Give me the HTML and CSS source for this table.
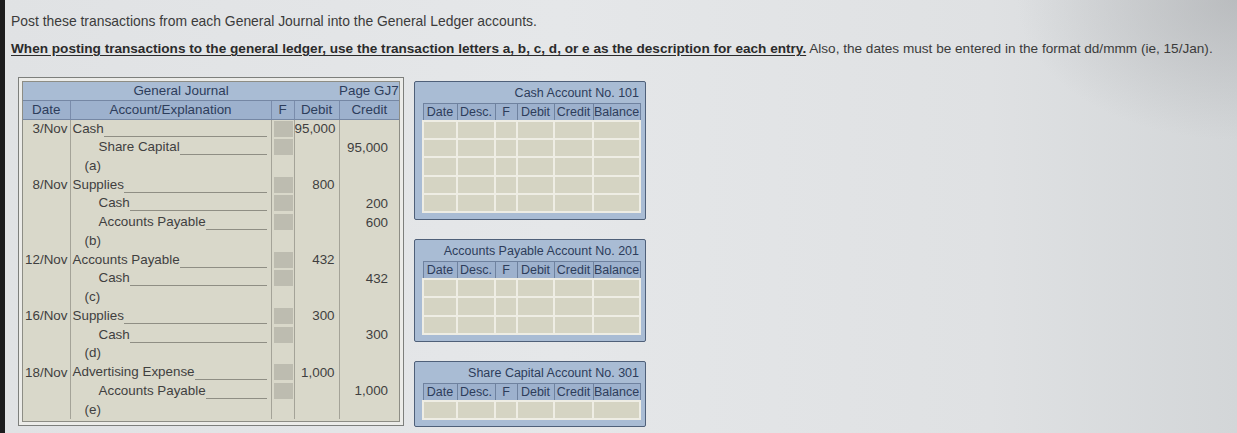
FILE: index.html
```html
<!DOCTYPE html>
<html lang="en">
<head>
<meta charset="utf-8">
<title>General Journal posting</title>
<link rel="stylesheet" href="styles.css">
</head>
<body>
<div class="screen">
  <p class="intro">Post these transactions from each General Journal into the General Ledger accounts.</p>
  <p class="instr"><strong>When posting transactions to the general ledger, use the transaction letters a, b, c, d, or e as the description for each entry.</strong> Also, the dates must be entered in the format dd/mmm (ie, 15/Jan).</p>

  <div class="workspace">
    <div class="journal">
      <div class="gj-frame">
        <table class="gj">
          <colgroup>
            <col class="c-date"><col class="c-acct"><col class="c-f"><col class="c-dr"><col class="c-cr">
          </colgroup>
          <thead>
            <tr class="gj-title"><th colspan="4">General Journal</th><th class="page">Page GJ7</th></tr>
            <tr class="gj-cols"><th>Date</th><th>Account/Explanation</th><th>F</th><th>Debit</th><th>Credit</th></tr>
          </thead>
          <tbody>
            <tr><td class="date">3/Nov</td><td><div class="acct-line"><span>Cash</span><i></i></div></td><td><div class="fbox"></div></td><td class="num dr">95,000</td><td class="num cr"></td></tr>
            <tr><td class="date"></td><td><div class="acct-line ind2"><span>Share Capital</span><i></i></div></td><td><div class="fbox"></div></td><td class="num dr"></td><td class="num cr">95,000</td></tr>
            <tr><td class="date"></td><td><div class="desc">(a)</div></td><td></td><td></td><td></td></tr>

            <tr><td class="date">8/Nov</td><td><div class="acct-line"><span>Supplies</span><i></i></div></td><td><div class="fbox"></div></td><td class="num dr">800</td><td class="num cr"></td></tr>
            <tr><td class="date"></td><td><div class="acct-line ind2"><span>Cash</span><i></i></div></td><td><div class="fbox"></div></td><td class="num dr"></td><td class="num cr">200</td></tr>
            <tr><td class="date"></td><td><div class="acct-line ind2"><span>Accounts Payable</span><i></i></div></td><td><div class="fbox"></div></td><td class="num dr"></td><td class="num cr">600</td></tr>
            <tr><td class="date"></td><td><div class="desc">(b)</div></td><td></td><td></td><td></td></tr>

            <tr><td class="date">12/Nov</td><td><div class="acct-line"><span>Accounts Payable</span><i></i></div></td><td><div class="fbox"></div></td><td class="num dr">432</td><td class="num cr"></td></tr>
            <tr><td class="date"></td><td><div class="acct-line ind2"><span>Cash</span><i></i></div></td><td><div class="fbox"></div></td><td class="num dr"></td><td class="num cr">432</td></tr>
            <tr><td class="date"></td><td><div class="desc">(c)</div></td><td></td><td></td><td></td></tr>

            <tr><td class="date">16/Nov</td><td><div class="acct-line"><span>Supplies</span><i></i></div></td><td><div class="fbox"></div></td><td class="num dr">300</td><td class="num cr"></td></tr>
            <tr><td class="date"></td><td><div class="acct-line ind2"><span>Cash</span><i></i></div></td><td><div class="fbox"></div></td><td class="num dr"></td><td class="num cr">300</td></tr>
            <tr><td class="date"></td><td><div class="desc">(d)</div></td><td></td><td></td><td></td></tr>

            <tr><td class="date">18/Nov</td><td><div class="acct-line"><span>Advertising Expense</span><i></i></div></td><td><div class="fbox"></div></td><td class="num dr">1,000</td><td class="num cr"></td></tr>
            <tr><td class="date"></td><td><div class="acct-line ind2"><span>Accounts Payable</span><i></i></div></td><td><div class="fbox"></div></td><td class="num dr"></td><td class="num cr">1,000</td></tr>
            <tr><td class="date"></td><td><div class="desc">(e)</div></td><td></td><td></td><td></td></tr>
          </tbody>
        </table>
      </div>
    </div>

    <div class="ledgers">
      <section class="acct">
        <h3>Cash Account No. 101</h3>
        <table class="ledger">
          <colgroup><col class="l-date"><col class="l-desc"><col class="l-f"><col class="l-dr"><col class="l-cr"><col class="l-bal"></colgroup>
          <thead><tr><th>Date</th><th>Desc.</th><th>F</th><th>Debit</th><th>Credit</th><th>Balance</th></tr></thead>
          <tbody>
            <tr><td></td><td></td><td></td><td></td><td></td><td></td></tr>
            <tr><td></td><td></td><td></td><td></td><td></td><td></td></tr>
            <tr><td></td><td></td><td></td><td></td><td></td><td></td></tr>
            <tr><td></td><td></td><td></td><td></td><td></td><td></td></tr>
            <tr><td></td><td></td><td></td><td></td><td></td><td></td></tr>
          </tbody>
        </table>
      </section>

      <section class="acct">
        <h3>Accounts Payable Account No. 201</h3>
        <table class="ledger">
          <colgroup><col class="l-date"><col class="l-desc"><col class="l-f"><col class="l-dr"><col class="l-cr"><col class="l-bal"></colgroup>
          <thead><tr><th>Date</th><th>Desc.</th><th>F</th><th>Debit</th><th>Credit</th><th>Balance</th></tr></thead>
          <tbody>
            <tr><td></td><td></td><td></td><td></td><td></td><td></td></tr>
            <tr><td></td><td></td><td></td><td></td><td></td><td></td></tr>
            <tr><td></td><td></td><td></td><td></td><td></td><td></td></tr>
          </tbody>
        </table>
      </section>

      <section class="acct">
        <h3>Share Capital Account No. 301</h3>
        <table class="ledger">
          <colgroup><col class="l-date"><col class="l-desc"><col class="l-f"><col class="l-dr"><col class="l-cr"><col class="l-bal"></colgroup>
          <thead><tr><th>Date</th><th>Desc.</th><th>F</th><th>Debit</th><th>Credit</th><th>Balance</th></tr></thead>
          <tbody>
            <tr><td></td><td></td><td></td><td></td><td></td><td></td></tr>
          </tbody>
        </table>
      </section>
    </div>
  </div>
</div>
</body>
</html>
```

FILE: styles.css
```css
* { box-sizing: border-box; }

html, body {
  margin: 0;
  padding: 0;
}

body {
  font-family: "Liberation Sans", Arial, sans-serif;
  background: #e2e4e6;
}

.screen {
  height: 433px;
  overflow: hidden;
  border-left: 5px solid #1c1c1d;
  padding: 13px 0 0 6px;
  color: #3b3b3b;
  background:
    radial-gradient(ellipse 220px 140px at 100% 0%, rgba(165, 167, 170, 0.55), rgba(165, 167, 170, 0) 100%),
    linear-gradient(90deg, #e0e2e4 0%, #e5e7e9 45%, #dfe1e3 80%, #d3d6d8 100%);
}

.intro,
.instr {
  margin: 0;
  font-size: 13.7px;
  line-height: 16px;
  white-space: nowrap;
}

.intro {
  font-size: 13.9px;
}

.instr {
  margin-top: 12px;
  font-size: 13.6px;
}

.instr strong {
  color: #2b2b2b;
  text-decoration: underline;
  text-underline-offset: 2px;
}

.workspace {
  display: flex;
  align-items: flex-start;
  gap: 10px;
  margin: 20px 0 0 7px;
}

/* ---------- General Journal ---------- */
.journal {
  width: 386px;
  border: 1px solid #7d7f7c;
  background: #ecece9;
  padding: 3px;
}

.gj-frame {
  border: 1px solid #8d8d85;
  background: #d9d8ca;
  padding-bottom: 2px;
}

.gj {
  width: 376px;
  table-layout: fixed;
  border-collapse: collapse;
  font-size: 13.4px;
  color: #3f3f3f;
}

.c-date { width: 47px; }
.c-acct { width: 201px; }
.c-f { width: 23px; }
.c-dr { width: 45px; }
.c-cr { width: 60px; }

.gj th {
  font-weight: normal;
  color: #2d3d5b;
  padding: 0;
  white-space: nowrap;
}

.gj-title th {
  height: 18px;
  background: #a9bcd4;
  text-align: center;
}

.gj-title th.page {
  text-align: right;
  padding: 0 2px 0 0;
  overflow: visible;
}

.gj-cols th {
  height: 19px;
  background: #9db1cd;
  border-top: 1px solid #7587a4;
  border-bottom: 1px solid #7587a4;
  border-left: 1px solid #7a8cab;
  text-align: center;
}

.gj-cols th:first-child {
  border-left: none;
}

.gj td {
  height: 18.75px;
  padding: 0;
  border-left: 1px solid #a4a398;
  white-space: nowrap;
  vertical-align: middle;
}

.gj td:first-child {
  border-left: none;
}

.gj td.date {
  text-align: right;
  padding-right: 2px;
}

.acct-line {
  display: flex;
  align-items: flex-end;
  height: 18px;
  padding-left: 2px;
  padding-right: 4px;
}

.acct-line span {
  line-height: 16px;
  padding-bottom: 1px;
}

.acct-line i {
  flex: 1;
  border-bottom: 1px solid #8f8e84;
  margin-bottom: 1px;
}

.acct-line.ind2 {
  padding-left: 28px;
}

.desc {
  padding-left: 14px;
  line-height: 18px;
}

.fbox {
  width: 19px;
  height: 16px;
  margin-left: 2px;
  background: #bdbcb0;
}

.gj td.num {
  text-align: right;
}

.gj td.dr { padding-right: 4px; }
.gj td.cr { padding-right: 11px; }

/* ---------- Ledger accounts ---------- */
.ledgers {
  width: 232px;
  margin-top: 4px;
  display: flex;
  flex-direction: column;
  gap: 19px;
}

.acct {
  border: 1px solid #4f6079;
  border-radius: 2px;
  background: #a9bcd4;
  padding: 0 6px 6px 7px;
}

.acct h3 {
  margin: 0;
  height: 21px;
  line-height: 23px;
  font-size: 12.5px;
  font-weight: normal;
  color: #2d3d5b;
  text-align: right;
  white-space: nowrap;
}

.ledger {
  width: 217px;
  table-layout: fixed;
  border-collapse: collapse;
  font-size: 12.5px;
}

.l-date { width: 34px; }
.l-desc { width: 38px; }
.l-f { width: 22px; }
.l-dr { width: 37px; }
.l-cr { width: 39px; }
.l-bal { width: 47px; }

.ledger th {
  height: 17px;
  padding: 0;
  font-weight: normal;
  color: #2d3d5b;
  background: #9db1cd;
  border: 1px solid #6f829f;
  text-align: center;
  white-space: nowrap;
  overflow: hidden;
}

.ledger td {
  height: 18.4px;
  padding: 0;
  background: #d5d4c3;
  border: 2px solid #eeede4;
}
```
